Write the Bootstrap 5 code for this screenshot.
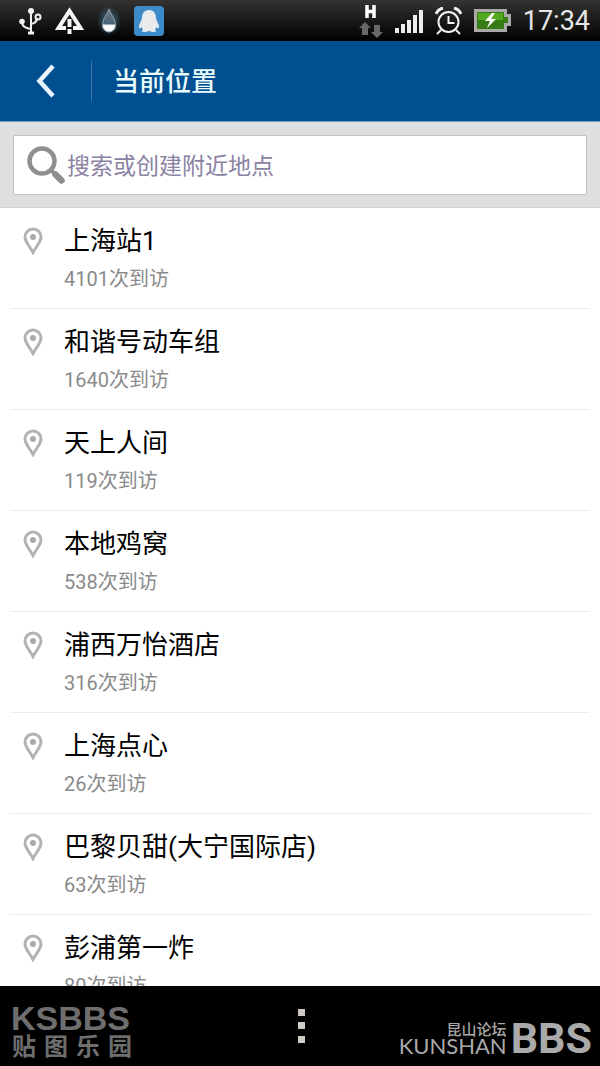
<!DOCTYPE html>
<html lang="zh-CN">
<head>
<meta charset="utf-8">
<meta name="viewport" content="width=device-width, initial-scale=1">
<title>当前位置</title>
<link href="https://cdn.jsdelivr.net/npm/bootstrap@5.3.0/dist/css/bootstrap.min.css" rel="stylesheet">
<style>
  body { font-family: Roboto, "Noto Sans CJK SC", sans-serif; background: #fff; color: #000; }
  svg { display: block; flex: none; }
  .status-bar { height: 41px; background: linear-gradient(#333331, #171716 55%, #000); padding: 0 10px 0 19px; }
  .status-left { gap: 13px; }
  .status-right { gap: 12px; }
  .status-clock { font-size: 27px; line-height: 32px; color: #e6e6e6; }
  .app-header { height: 81px; background: #004f90; border-bottom: 1px solid #6f9cc0; }
  .back-btn { width: 91px; height: 40px; padding: 0 0 0 35px; border: 0; background: none; }
  .header-rule { width: 1px; height: 40px; background: #3c74a6; }
  .header-title { font-size: 26px; line-height: 36px; color: #e9fbfb; padding: 2px 0 0 5px; }
  .search-area { background: #dfdfdf; border-bottom: 1px solid #d2d2d2; padding: 13px 13px 12px; }
  .search-box { height: 60px; background: #fff; border: 1px solid #c2c0c2; border-radius: 2px; padding: 0 12px; }
  .search-input { font-size: 23px; line-height: 34px; height: 40px; padding: 2px 0 0 1px; border: 0; background: none; box-shadow: none; color: #333; }
  .search-input::placeholder { color: #8a82a3; opacity: 1; }
  .place-list { min-height: 0; overflow-y: auto; scrollbar-width: none; padding: 0 10px; }
  .place-list::-webkit-scrollbar { display: none; }
  .place-row { height: 101px; flex: none; padding: 14px 0 0 13px; border: 0; border-bottom: 1px solid #ebebeb; color: #000; gap: 21px; }
  .place-row svg { margin-top: 5px; }
  .place-name { font-size: 26px; line-height: 38px; }
  .place-visits { font-size: 20px; line-height: 38px; color: #8a8a8a; }
  .bottom-bar { height: 80px; background: #000; padding: 0 8px 0 11px; }
  .mark-left { width: 122px; color: #6e6e6e; }
  .mark-latin { font: bold 34px/34px "Liberation Sans", sans-serif; }
  .mark-han { font-size: 24px; line-height: 24px; font-weight: 700; text-align-last: justify; padding: 0 1px; }
  .mark-right { color: #aaa; }
  .mark-site { font-size: 15px; line-height: 14px; font-weight: 500; }
  .mark-city { font: 22px/18px Lato, sans-serif; padding-bottom: 5px; }
  .mark-bbs { font: bold 43px/43px Roboto, sans-serif; }
  .menu-btn { border: 0; background: none; padding: 8px; }
</style>
</head>
<body>
<div class="d-flex flex-column vh-100">
  <div class="status-bar d-flex align-items-center justify-content-between flex-shrink-0">
    <div class="status-left d-flex align-items-center">
      <svg width="23" height="28" viewBox="0 0 23 28" fill="none" stroke="#f2f2f2" stroke-width="2"><path d="M12 4V26M12 22Q4 21 3 16M12 17Q18 16 18 11"/><circle cx="12" cy="4" r="3" fill="#f2f2f2" stroke="none"/><circle cx="3" cy="14.500" r="2.800" fill="#f2f2f2" stroke="none"/><circle cx="19" cy="10" r="2.500"/><path d="M9 26h6" stroke-width="3"/></svg>
      <svg width="29" height="28" viewBox="0 0 29 28"><path fill="none" stroke="#f5f5f5" stroke-width="4" d="M11 21H3.500L14.500 4 25.500 21H18"/><path fill="#f5f5f5" d="M12.500 12h4v8h-4zM12.500 22h4v5h-4z"/></svg>
      <svg width="24" height="30" viewBox="0 0 24 30"><defs><radialGradient id="glow"><stop offset="0" stop-color="#3f7594"/><stop offset="1" stop-color="#3f7594" stop-opacity="0"/></radialGradient><linearGradient id="drop" x2="0" y2="1"><stop offset="0" stop-color="#777"/><stop offset=".65" stop-color="#456579"/><stop offset=".7" stop-color="#f4f8fa"/><stop offset="1" stop-color="#fff"/></linearGradient></defs><ellipse cx="12" cy="15" rx="12" ry="15" fill="url(#glow)"/><path d="M12 3C10 9 5.500 13 5.500 19.500a6.500 6.500 0 0 0 13 0C18.500 13 14 9 12 3z" fill="url(#drop)" stroke="#8fa3ae"/></svg>
      <svg width="30" height="30" viewBox="0 0 30 30"><rect width="30" height="30" rx="4" fill="#3d8cc9"/><path fill="#e8eaec" d="M15 4c5 0 7 4 7 8 0 3 3 5 3 9 0 2-2 1-3 0 0 2-1 2-1 3 2 1 1 2-2 2-2 0-3-1-4-1s-2 1-4 1c-3 0-4-1-2-2 0-1-1-1-1-3-1 1-3 2-3 0 0-4 3-6 3-9 0-4 2-8 7-8z"/></svg>
    </div>
    <div class="status-right d-flex align-items-center">
      <svg width="24" height="34" viewBox="0 0 24 34"><path d="M8 1v13M15 1v13M8 7.500h7" stroke="#fff" stroke-width="3.500"/><path fill="#686868" d="M6 18l6 6H9v7H3v-7H0zM18 34l6-6h-3v-7h-6v7h-3z"/></svg>
      <svg width="28" height="24" viewBox="0 0 28 24" fill="#ededed"><path d="M0 19h4v5H0zM6 15h4v9H6zM12 11h4v13h-4zM18 6h4v18h-4zM24 1h4v23h-4z"/></svg>
      <svg width="27" height="28" viewBox="0 0 27 28" fill="none" stroke="#f2f2f2" stroke-width="2"><circle cx="13.500" cy="15" r="10"/><path d="M13.500 9v7h6M6 23l-4 4M21 23l4 4"/><path stroke-width="3" d="M1 7Q3 2 8 1M26 7Q24 2 19 1"/></svg>
      <svg width="37" height="23" viewBox="0 0 37 23"><path d="M1.500 1.500h30v5h4v9h-4v6h-30z" fill="#377b15" stroke="#aaa" stroke-width="3"/><path fill="#51a91d" d="M4 4h25v7H4z"/><path fill="#fff" d="M18 4l-7 8h5l-3 7 9-9h-5l4-6z"/></svg>
      <span class="status-clock">17:34</span>
    </div>
  </div>

  <header class="app-header d-flex align-items-center flex-shrink-0">
    <button class="back-btn" type="button" aria-label="返回"><svg width="20" height="34" viewBox="0 0 20 34" fill="none" stroke="#eaf4ff" stroke-width="4.500"><path d="M18 2L4.500 17 18 32"/></svg></button>
    <div class="header-rule"></div>
    <h1 class="header-title mb-0 ms-3">当前位置</h1>
  </header>

  <div class="search-area flex-shrink-0">
    <label class="search-box d-flex align-items-center">
      <svg width="40" height="40" viewBox="0 0 40 40" fill="none" stroke="#8f8f8f"><circle cx="16" cy="16" r="12.500" stroke-width="4.500"/><path d="M25 25l3.500 3.500" stroke-width="4"/><path d="M29.500 29.500l6 6" stroke-width="6.500" stroke-linecap="round"/></svg>
      <input class="search-input form-control" type="text" placeholder="搜索或创建附近地点" aria-label="搜索或创建附近地点">
    </label>
  </div>

  <svg width="0" height="0" class="position-absolute" aria-hidden="true"><symbol id="pin" viewBox="0 0 20 28"><path d="M10 2a8 8 0 0 1 8 8c0 5-5 9.500-8 15.500C7 19.500 2 15 2 10a8 8 0 0 1 8-8z" fill="none" stroke="#b2b2b2" stroke-width="3"/><circle cx="10" cy="10" r="3" fill="#aaa"/></symbol></svg>

  <main class="place-list list-group list-group-flush flex-grow-1">
    <a href="#" class="place-row list-group-item d-flex align-items-start"><svg width="20" height="28"><use href="#pin"/></svg><div><div class="place-name">上海站1</div><div class="place-visits">4101次到访</div></div></a>
    <a href="#" class="place-row list-group-item d-flex align-items-start"><svg width="20" height="28"><use href="#pin"/></svg><div><div class="place-name">和谐号动车组</div><div class="place-visits">1640次到访</div></div></a>
    <a href="#" class="place-row list-group-item d-flex align-items-start"><svg width="20" height="28"><use href="#pin"/></svg><div><div class="place-name">天上人间</div><div class="place-visits">119次到访</div></div></a>
    <a href="#" class="place-row list-group-item d-flex align-items-start"><svg width="20" height="28"><use href="#pin"/></svg><div><div class="place-name">本地鸡窝</div><div class="place-visits">538次到访</div></div></a>
    <a href="#" class="place-row list-group-item d-flex align-items-start"><svg width="20" height="28"><use href="#pin"/></svg><div><div class="place-name">浦西万怡酒店</div><div class="place-visits">316次到访</div></div></a>
    <a href="#" class="place-row list-group-item d-flex align-items-start"><svg width="20" height="28"><use href="#pin"/></svg><div><div class="place-name">上海点心</div><div class="place-visits">26次到访</div></div></a>
    <a href="#" class="place-row list-group-item d-flex align-items-start"><svg width="20" height="28"><use href="#pin"/></svg><div><div class="place-name">巴黎贝甜(大宁国际店)</div><div class="place-visits">63次到访</div></div></a>
    <a href="#" class="place-row list-group-item d-flex align-items-start"><svg width="20" height="28"><use href="#pin"/></svg><div><div class="place-name">彭浦第一炸</div><div class="place-visits">80次到访</div></div></a>
  </main>

  <footer class="bottom-bar d-flex align-items-center flex-shrink-0">
    <div class="col d-flex"><div class="mark-left pt-2"><div class="mark-latin">KSBBS</div><div class="mark-han">贴图乐园</div></div></div>
    <button class="menu-btn" type="button" aria-label="菜单"><svg width="8" height="36" viewBox="0 0 8 36" fill="#cfccc6"><path d="M0 1h7v7H0zM0 14h7v7H0zM0 28h7v7H0z"/></svg></button>
    <div class="mark-right col d-flex align-items-end justify-content-end gap-1 pt-4">
      <div class="text-end"><div class="mark-site">昆山论坛</div><div class="mark-city">KUNSHAN</div></div>
      <div class="mark-bbs">BBS</div>
    </div>
  </footer>
</div>
<script src="https://cdn.jsdelivr.net/npm/bootstrap@5.3.0/dist/js/bootstrap.bundle.min.js"></script>
</body>
</html>
